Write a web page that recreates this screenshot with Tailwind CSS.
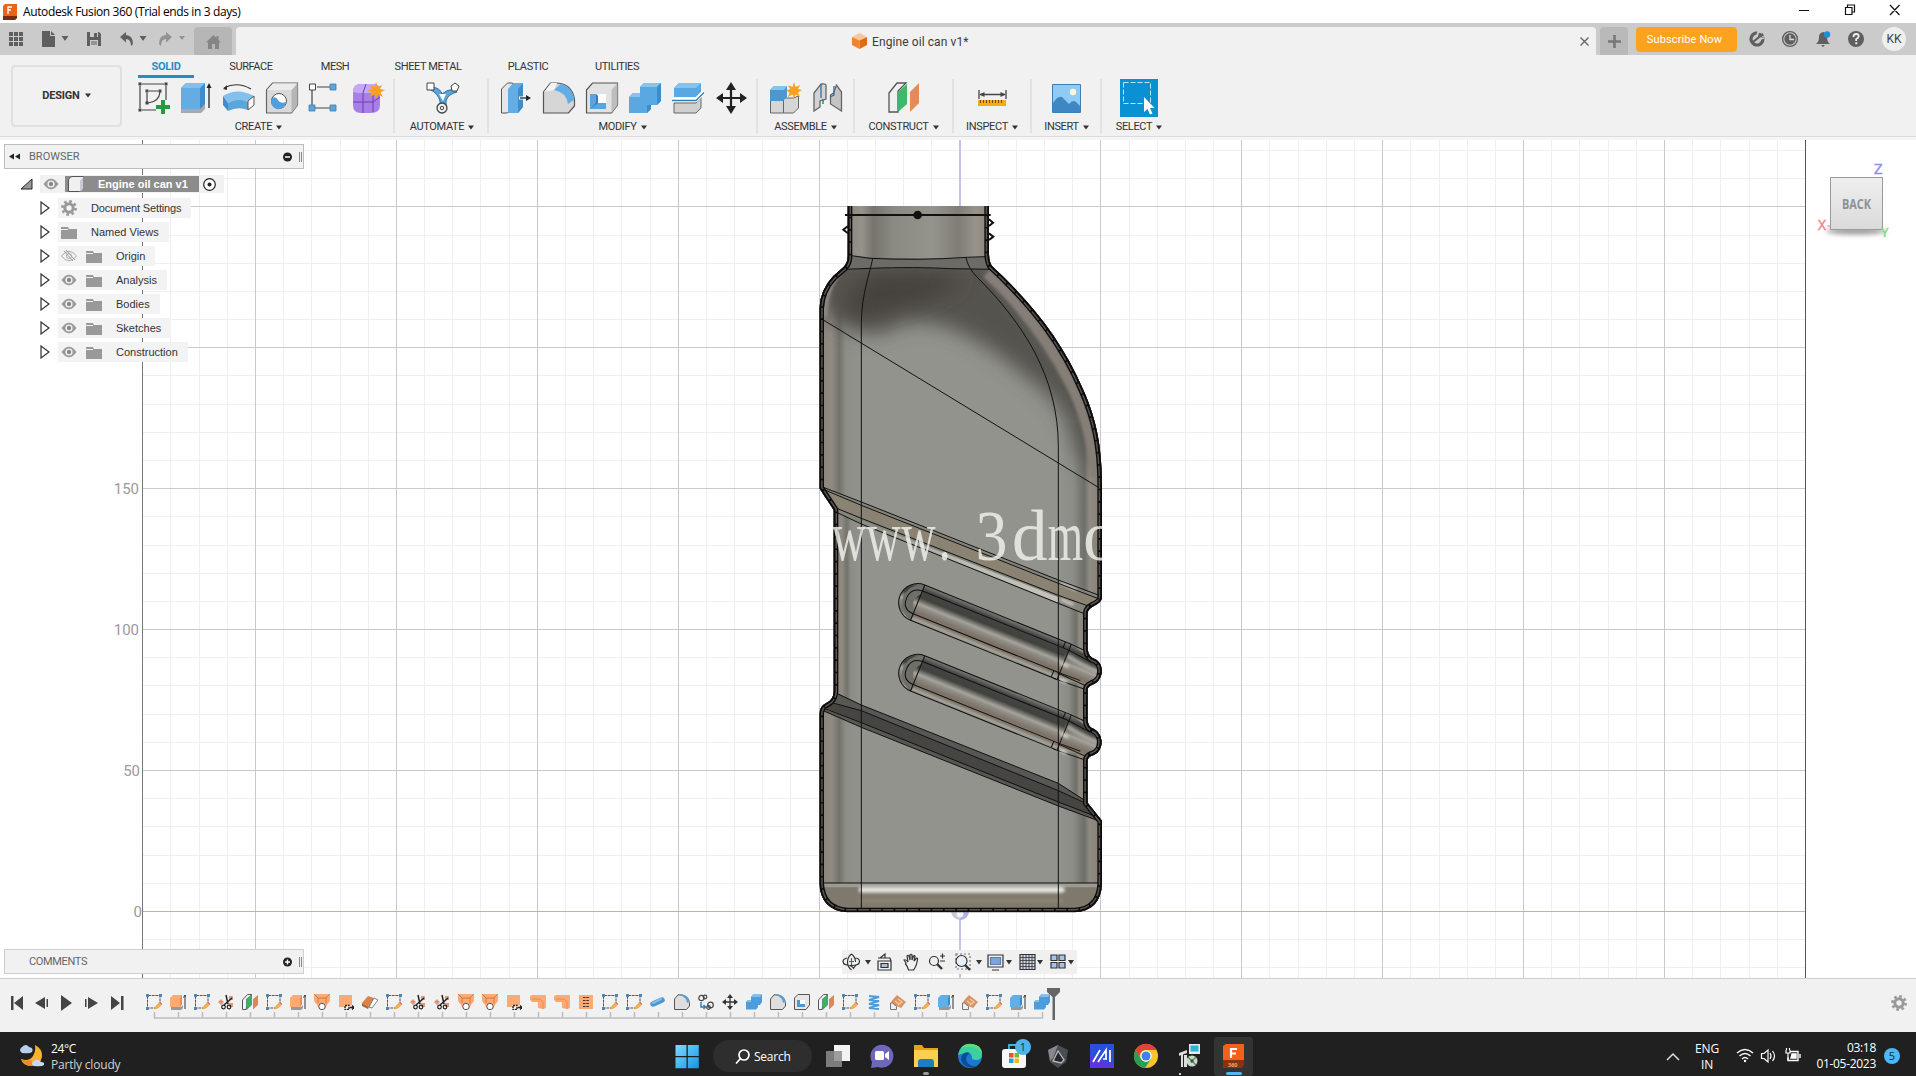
<!DOCTYPE html>
<html lang="en">
<head>
  <meta charset="UTF-8">
  <meta name="viewport" content="width=device-width, initial-scale=1.0">
  <title>Autodesk Fusion 360</title>
  <script src="https://cdn.jsdelivr.net/npm/@tailwindcss/browser@4"></script>
</head>
<body class="w-[1916px] h-[1076px] overflow-hidden flex flex-col bg-white font-['Roboto',sans-serif] text-[#333]">

  <!-- Shared icons -->
  <svg class="hidden">
    <symbol id="i-caret" viewBox="0 0 6 5"><path d="M0 .5h6L3 4.5z" fill="currentColor"/></symbol>
    <symbol id="i-eye" viewBox="0 0 16 12"><path d="M.5 6Q8-4.500 15.500 6 8 16.500.5 6z" fill="#999"/><circle cx="8" cy="6" r="3.600" fill="#f1f1f1"/><circle cx="8" cy="6" r="2.200" fill="#888"/></symbol>
    <symbol id="i-eyeoff" viewBox="0 0 16 12"><path d="M.5 6Q8-3.500 15.500 6 8 15.500.5 6z" fill="none" stroke="#aaa"/><circle cx="8" cy="6" r="2.500" fill="none" stroke="#aaa"/><path d="M3 1l9 10M5 0l9 10" stroke="#999" stroke-width=".9"/></symbol>
    <symbol id="i-folder" viewBox="0 0 16 13"><path d="M0 1h7l1 2h8v10H0z" fill="#999"/><path d="M0 3.500h7" stroke="#f1f1f1"/></symbol>
    <symbol id="i-gear" viewBox="0 0 16 16"><circle cx="8" cy="8" r="4.200" fill="none" stroke="#999" stroke-width="3"/><circle cx="8" cy="8" r="6.600" fill="none" stroke="#999" stroke-width="2.600" stroke-dasharray="2.600 2.580"/></symbol>
    <symbol id="i-tri" viewBox="0 0 10 14"><path d="M1 1v12l8-6z" fill="#fff" stroke="#333" stroke-width="1.200"/></symbol>

    <symbol id="t-sketch" viewBox="0 0 16 16"><path d="M1.500 2v12h8M2 1.500h12v7" fill="none" stroke="#444" stroke-width=".9" stroke-dasharray="3 .7"/><g fill="#4d86b5"><path d="M0 0h3v3H0zM13 0h3v3h-3zM0 13h3v3H0z"/></g><path d="M8.500 15.500l1-3.500 3.500-3.500 2.500 2.500-3.500 3.500z" fill="#f0b04c"/><path d="M13 8.500l1-1 2.500 2.500-1 1z" fill="#dd6a4a"/></symbol>
    <symbol id="t-extrude" viewBox="0 0 16 16"><path d="M1 13h10l2-2v3l-2 2H1z" fill="#999"/><path d="M0 4l3-3h9v9l-2 3H0z" fill="#fbaa73"/><path d="M10 4v9l2-3V1z" fill="#ea8c4e"/><path d="M15 15V2M13.500 3.500L15 1l1.500 2.500" stroke="#333" fill="none"/></symbol>
    <symbol id="t-extrudeb" viewBox="0 0 16 16"><path d="M1 13h10l2-2v3l-2 2H1z" fill="#999"/><path d="M0 4l3-3h9v9l-2 3H0z" fill="#62aee6"/><path d="M10 4v9l2-3V1z" fill="#3b88c6"/><path d="M15 15V2M13.500 3.500L15 1l1.500 2.500" stroke="#333" fill="none"/></symbol>
    <symbol id="t-cut" viewBox="0 0 16 16"><path d="M0 8l3-3 3 3-3 3zM11 2h4v4h-4zM11 9h4v4h-4z" fill="#d99a78"/><path d="M8 1l2 9M14 4l-8 7" stroke="#222" stroke-width="1.500"/><circle cx="5.500" cy="13" r="1.800" fill="none" stroke="#222" stroke-width="1.200"/><circle cx="11" cy="13" r="1.800" fill="none" stroke="#222" stroke-width="1.200"/></symbol>
    <symbol id="t-plane" viewBox="0 0 16 16"><path d="M.5 6l5-5.500h4L4 15.500H.5z" fill="#f4f4f4" stroke="#555"/><path d="M4.500 5l5-4v10l-5 4.500z" fill="#3fae68" stroke="#2a7a48" stroke-width=".6"/><path d="M11 5l5-4v10l-5 4.500z" fill="#dd8658"/></symbol>
    <symbol id="t-loft" viewBox="0 0 16 16"><path d="M0 0h16v7l-3 4-2 4H5L3 11 0 7z" fill="#fbaa73"/><path d="M0 0l4 4v5M16 0l-4 4v5M4 4h8" stroke="#d07a42" fill="none"/><circle cx="8" cy="12.500" r="3.200" fill="#fff" stroke="#555"/></symbol>
    <symbol id="t-hole" viewBox="0 0 16 16"><path d="M1 1h13v10H6v2H1z" fill="#fbaa73"/><path d="M7 11.500h4v4H7z" fill="#fff" stroke="#222" stroke-width="1.400" stroke-dasharray="2 .7"/><path d="M12 13.500h4M14 11.500l2 2-2 2" stroke="#222" fill="none" stroke-width="1.300"/></symbol>
    <symbol id="t-box" viewBox="0 0 16 16"><path d="M0 9l6-7 6 2-5 9z" fill="#d9834a"/><path d="M0 9l7 4-1 2-6-3z" fill="#b9622f"/><path d="M12 4l4 2-6 8-3-1z" fill="#fff" stroke="#666" stroke-width=".8"/></symbol>
    <symbol id="t-bend" viewBox="0 0 16 16"><path d="M0 2l2-1h14v13l-3 1-5-1V8H2L0 6z" fill="#fbaa73"/><path d="M2 5h8l3 3v7" fill="none" stroke="#e88c50"/></symbol>
    <symbol id="t-thread" viewBox="0 0 16 16"><path d="M1 1h14v14H1z" fill="#fbaa73"/><path d="M5 3.500h6M5 6.500h6M5 9.500h6M5 12.500h6" stroke="#333" stroke-width="1.100" stroke-dasharray="2.500 .8"/></symbol>
    <symbol id="t-pipe" viewBox="0 0 16 16"><path d="M3 10l9-4" stroke="#4d97d1" stroke-width="5.500" stroke-linecap="round"/><path d="M3 9l8-4" stroke="#82bdea" stroke-width="2" stroke-linecap="round"/></symbol>
    <symbol id="t-fillet" viewBox="0 0 16 16"><path d="M.5 15.500V5L4 .8Q14 0 15.500 9v3l-3 3.500z" fill="#dedede" stroke="#555"/><path d="M5 1Q13 3 13 9l2.500-2Q14 1 8 .8z" fill="#5a9dd0"/></symbol>
    <symbol id="t-joint" viewBox="0 0 16 16"><g fill="none" stroke="#444" stroke-width="1.200"><circle cx="3.500" cy="4" r="2.700"/><circle cx="7" cy="3" r="1.800"/><circle cx="12.500" cy="11" r="2.800"/><circle cx="10.500" cy="13.500" r="1.800"/></g><path d="M3 8v5h4M5.500 11l2 2-2 2" stroke="#3577b5" fill="none" stroke-width="1.400"/></symbol>
    <symbol id="t-move" viewBox="0 0 16 16"><path d="M8 2v12M2 8h12" stroke="#333" stroke-width="1.300"/><path d="M8 0l3 4H5zM8 16l3-4H5zM0 8l4-3v6zM16 8l-4-3v6z" fill="#333"/></symbol>
    <symbol id="t-combine" viewBox="0 0 16 16"><path d="M5 3l2-2.500h9V8l-2 3h-2v2l-2 2.500H0V8l2-2h3z" fill="#4d9cdb"/><path d="M5 3l2-2.500h9L14 3zM0 8l2-2h3v2z" fill="#82bfee"/></symbol>
    <symbol id="t-shell" viewBox="0 0 16 16"><path d="M.5 4L4 .5h11.500V11L12 15.500H.5z" fill="#e6e6e6" stroke="#555"/><path d="M3 6h8v7H3z" fill="#fff"/><path d="M3 6h3v4h5v3H3z" fill="#4d97d1"/></symbol>
    <symbol id="t-coil" viewBox="0 0 16 16"><path d="M3 2l10 1-10 3 10 1-10 3 10 1-10 3 10 1" fill="none" stroke="#4d9cdb" stroke-width="2"/></symbol>
    <symbol id="t-tan" viewBox="0 0 16 16"><path d="M1.500 10V7L7 1l9 7-5 6z" fill="#d89264"/><path d="M.5 15.500V9h2l4 3.500v3z" fill="#eee" stroke="#666" stroke-width=".9"/><path d="M8 5l4 3-4 3M5 7l4 3" stroke="#f3cfa6" stroke-width="1.300" fill="none"/></symbol>
  </svg>

  <!-- Title bar -->
  <header class="h-[23px] shrink-0 flex items-center bg-white text-black font-['Open_Sans',sans-serif]">
    <svg class="ml-[3px] w-[14px] h-[16px]" viewBox="0 0 14 16"><path d="M0 2l2-2h12v14l-2 2H0z" fill="#e8641b"/><path d="M0 12h14v2l-2 2H0z" fill="#7a2c0c"/><path d="M5 10V3h4M5 6h3" stroke="#fff" stroke-width="1.300" fill="none"/></svg>
    <span class="ml-[6px] text-[12px] whitespace-nowrap tracking-[-0.380px]">Autodesk Fusion 360 (Trial ends in 3 days)</span>
    <svg class="ml-auto mr-[15px] mb-[3px] w-[102px] h-[12px]" viewBox="0 0 102 12" fill="none" stroke="#111" stroke-width="1.200"><path d="M0 6.500h10M46.500 3.500h6.500v7h-6.500zM48.500 3V1h7v7h-2M91 1l9.500 10M100.500 1L91 11"/></svg>
  </header>

  <!-- Tab strip -->
  <div class="h-[32px] shrink-0 flex bg-[#cbcbcb] text-[#666]">
    <svg class="w-[194px] h-[32px]" viewBox="0 0 194 32" fill="#5f5f5f">
      <path d="M9 9h4v4H9zM14 9h4v4h-4zM19 9h4v4h-4zM9 14h4v4H9zM14 14h4v4h-4zM19 14h4v4h-4zM9 19h4v4H9zM14 19h4v4h-4zM19 19h4v4h-4z"/>
      <path d="M42 8h8v5h5v11H42zM51 8l4 4h-4zM61.500 13h7l-3.500 5z"/>
      <path d="M87 9h12l2 2v12H87z"/><path d="M90 9h8v5h-8zM90 17h8v6h-8z" fill="#cbcbcb"/><path d="M94 10h3v4h-3zM91 18.500h6v1h-6zM91 20.500h6v1h-6z"/>
      <path d="M120 14l6-5v3q7 .5 7 9l-2 2q0-7-5-7v3.500zM139.500 13h7l-3.500 5z"/>
      <path d="M172 14l-6-5v3q-7 .5-7 9l2 2q0-7 5-7v3.500zM179 13h6l-3 4z" fill="#939393"/>
    </svg>
    <div class="mt-[4px] w-[38px] h-[28px] bg-[#b6b6b6] rounded-t-sm flex items-center justify-center">
      <svg class="mt-[2px] w-[15px] h-[14px]" viewBox="0 0 15 14"><path d="M0 7.500L7.500 0l3 3V1h2v4L15 7.500h-2V14H9V9H6v5H2V7.500z" fill="#858585"/></svg>
    </div>
    <div class="mt-[4px] ml-[4px] w-[1360px] h-[28px] bg-[#f1f1f1] rounded-t-sm flex items-center">
      <svg class="ml-[616px] w-[15px] h-[16px]" viewBox="0 0 15 16"><path d="M0 4l7.500-4L15 4 7.500 7.500z" fill="#f9c796"/><path d="M0 4l7.500 3.500V16L0 12z" fill="#ee8433"/><path d="M15 4L7.500 7.500V16L15 12z" fill="#dc6a1c"/></svg>
      <span class="ml-[5px] mt-px text-[12px] text-[#3a3a3a] whitespace-nowrap tracking-[0.090px]">Engine oil can v1*</span>
      <svg class="ml-auto mr-[7px] w-[9px] h-[9px]" viewBox="0 0 9 9"><path d="M.5.5l8 8M8.500.5l-8 8" stroke="#666" stroke-width="1.400"/></svg>
    </div>
    <div class="mt-[4px] ml-[4px] w-[28px] h-[28px] bg-[#b9b9b9] rounded-t-sm flex items-center justify-center">
      <svg class="w-[13px] h-[13px]" viewBox="0 0 13 13"><path d="M6.500 0v13M0 6.500h13" stroke="#777" stroke-width="2.600"/></svg>
    </div>
    <button class="ml-[8px] mt-[4px] w-[101px] h-[25px] bg-[#fba31e] rounded text-white text-[11px] pr-1 pt-px whitespace-nowrap tracking-[0.120px]">Subscribe Now</button>
    <svg class="ml-[8px] w-[130px] h-[32px]" viewBox="0 0 130 32">
      <circle cx="12" cy="16" r="6" fill="none" stroke="#5f5f5f" stroke-width="3.200" stroke-dasharray="30 4 2 2" transform="rotate(-20 12 16)"/><path d="M13 9l-1 4 3 3 4-1" stroke="#cbcbcb" stroke-width="1.600" fill="none"/><path d="M7 20l7-6M14 14l4-3M14 14l1-4" stroke="#5f5f5f" stroke-width="2.200" fill="none"/>
      <circle cx="45" cy="16" r="7.400" fill="none" stroke="#5f5f5f" stroke-width="1.400"/><circle cx="45" cy="16" r="5.700" fill="#5f5f5f"/><path d="M45 12v4.500h4" stroke="#ddd" stroke-width="1.300" fill="none"/>
      <path d="M71 21q3-2 3-7 0-4 4-5 4 1 4 5 0 5 3 7zM76 22h4l-2 2z" fill="#5f5f5f"/><circle cx="82" cy="11.500" r="3.200" fill="#1d8fd6"/>
      <circle cx="111" cy="16" r="8" fill="#5f5f5f"/><path d="M108.500 14q0-3 2.700-3 2.500 0 2.500 2.300 0 1.500-2.500 2.700v2" stroke="#eee" stroke-width="1.800" fill="none"/><path d="M110.300 19.200h2v2h-2z" fill="#eee"/>
    </svg>
    <div class="ml-[7px] mt-[4px] size-6 rounded-full bg-[#efefef] text-[#444] text-[12px] flex items-center justify-center">KK</div>
  </div>

  <!-- Ribbon -->
  <div class="h-[82px] shrink-0 flex bg-[#f1f1f1] border-b border-[#dcdcdc] text-[11px] leading-[12px]">
    <button class="ml-[11px] mt-[10px] w-[111px] h-[62px] border-2 border-[#e0e0e0] rounded font-bold tracking-[-0.200px] flex items-center justify-center gap-[5px] pb-px">DESIGN<svg class="w-[6px] h-[5px]"><use href="#i-caret"/></svg></button>
    <div class="ml-[2px]">
      <nav class="h-[23px] pl-[14px] flex text-center tracking-[-0.400px] whitespace-nowrap *:pt-[6px]">
        <div class="w-[56px] h-[23px] border-b-[3px] border-[#1f8fc8] text-[#1f8fc8] font-bold tracking-[-0.300px]">SOLID</div>
        <div class="w-[114px]">SURFACE</div>
        <div class="w-[54px]">MESH</div>
        <div class="w-[132px]">SHEET METAL</div>
        <div class="w-[68px]">PLASTIC</div>
        <div class="w-[110px]">UTILITIES</div>
      </nav>
      <div class="flex tracking-[-0.330px] pt-px *:h-[54px] *:flex *:flex-col *:items-center">
        <div class="w-[271px] border-r-2 border-[#e2e2e2]">
          <div class="h-[38px] pl-[2px] flex items-center *:w-[43px] *:h-[34px]">
            <svg viewBox="0 0 43 34"><g fill="none" stroke="#444" stroke-width="1.200"><path d="M11 3h22M9 5v22M11 29h14M35 5v14"/><path d="M18 10h9M16 12v9M17 22q11-1 12-11" /></g><g fill="#444"><path d="M7.500 1.500h3v3h-3zM33.500 1.500h3v3h-3zM7.500 27.500h3v3h-3zM14.500 8.500h3v3h-3zM27.500 8.500h3v3h-3zM14.500 20.500h3v3h-3z"/></g><path d="M30 19h4v5h5v4h-5v5h-4v-5h-5v-4h5z" fill="#1f9d45"/></svg>
            <svg viewBox="0 0 43 34"><path d="M7 27h19l5-4v5l-4 4H7z" fill="#aaa"/><path d="M7 7l5-5h19v21l-5 5H7z" fill="#63ade4"/><path d="M26 7l5-5v21l-5 5z" fill="#3f8cc8"/><path d="M7 7l5-5h19l-5 5z" fill="#7fc0f0"/><path d="M35 27V6" stroke="#222" stroke-width="1.300"/><path d="M35 2l2.500 5h-5z" fill="#222"/></svg>
            <svg viewBox="0 0 43 34"><path d="M7 7q13-7 27 1" fill="none" stroke="#333" stroke-width="1.200"/><path d="M6 8l4-4v5z" fill="#333"/><path d="M6 15q14-9 31 0l-6 6q-10-5-20 1z" fill="#82c0ee"/><path d="M6 15l5 7v8l-5-6z" fill="#3f8cc8"/><path d="M11 22q10-6 20-1v8q-10-4-20 1z" fill="#5aa5dc"/><path d="M31 20l6-5v9l-6 5z" fill="#fff" stroke="#555"/></svg>
            <svg viewBox="0 0 43 34"><path d="M6.500 9l6-7h25v22l-6 8h-25z" fill="#d9d9d9" stroke="#666" stroke-width="1.200"/><path d="M31.500 9l6-7v22l-6 8z" fill="#b5b5b5"/><path d="M7 9l6-6.500h24L31.500 9z" fill="#ececec"/><circle cx="19" cy="20" r="7.500" fill="#fff" stroke="#555"/><path d="M12 17a7.500 7.500 0 1 0 14 4q-6 2-8-2t-6-2z" fill="#4f9fdc"/></svg>
            <svg viewBox="0 0 43 34"><path d="M14 6h14M9 9v15M12 27h15" stroke="#444" stroke-width="1.200"/><path d="M6.500 3h6v6h-6z" fill="#fff" stroke="#444"/><g fill="#5aa5dc" stroke="#3f7faf" stroke-width=".8"><path d="M27 3h6v6h-6zM6 24h6v6H6zM27 24h6v6h-6z"/></g></svg>
            <svg viewBox="0 0 43 34"><path d="M7 11q0-8 8-8h13q6 0 6 8v13q0 8-9 8H15q-8 0-8-8z" fill="#a77fe6"/><path d="M7 11q0-8 8-8h13q4 0 6 5l-6 4H12z" fill="#c7a8f5"/><path d="M7 21h20l7-5M17 12v20M27 12v19M17 12l3-9" stroke="#6d3fb0" fill="none"/><path d="M30 1l1.500 5L36 4l-2 4 5 1-4.500 2.500L37 16l-5-2.500L30 18l-1.500-4.500L24 16l1.500-5L21 9.500 26 8l-2-4 4.500 2z" fill="#f9a11c"/></svg>
          </div>
          <div class="mt-[4px] flex items-center gap-[4px]">CREATE<svg class="w-[6px] h-[5px]"><use href="#i-caret"/></svg></div>
        </div>
        <div class="w-[94px] border-r-2 border-[#e2e2e2] pl-[2px]">
          <svg class="w-[43px] h-[38px] py-[2px]" viewBox="0 0 43 34"><path d="M8 5q12 2 13 8 4-4 12-5l3 3q-9 2-11 9v8h-6v-8Q17 12 8 8z" fill="#5aa5dc" stroke="#2d6ea5"/><path d="M18 13h7l-3 7z" fill="#fff"/><path d="M6 2h7v7H6z" fill="#fff" stroke="#444"/><path d="M30 5l4-3 4 3-2 5h-5z" fill="#fff" stroke="#444"/><circle cx="21" cy="27" r="5" fill="#eee" stroke="#444" stroke-width="1.300"/><circle cx="21" cy="27" r="1.700" fill="none" stroke="#444"/></svg>
          <div class="mt-[4px] flex items-center gap-[4px]">AUTOMATE<svg class="w-[6px] h-[5px]"><use href="#i-caret"/></svg></div>
        </div>
        <div class="w-[269px] border-r-2 border-[#e2e2e2]">
          <div class="h-[38px] pl-[3px] flex items-center *:w-[43px] *:h-[34px]">
            <svg viewBox="0 0 43 34"><path d="M6.500 8l6-6h5v24l-5 6h-6z" fill="#e6e6e6" stroke="#555"/><path d="M13 8l5-6h10v24l-5 6H13z" fill="#63ade4"/><path d="M23 8l5-6v24l-5 6z" fill="#3f8cc8"/><path d="M24 17h8" stroke="#fff" stroke-width="3"/><path d="M25 17h9" stroke="#222" stroke-width="1.300"/><path d="M31 14l5 3-5 3z" fill="#222"/></svg>
            <svg viewBox="0 0 43 34"><path d="M5.500 32V11l7-9h5q16 0 19 16v7l-6 7z" fill="#d6d6d6" stroke="#555" stroke-width="1.200"/><path d="M6 11l7-9h6l-3 7z" fill="#f4f4f4"/><path d="M16 9l7-6.500q11 3 13.500 16L30 23Q28 11 16 9z" fill="#63ade4"/></svg>
            <svg viewBox="0 0 43 34"><path d="M5.500 9l6-7h25v22l-6 8h-25z" fill="#e2e2e2" stroke="#555" stroke-width="1.200"/><path d="M30.500 9l6-7v22l-6 8z" fill="#bdbdbd"/><path d="M9 13h16v15H9z" fill="#fff"/><path d="M9 13h6l2 2v7h8v6H9z" fill="#5aa5dc"/><path d="M9 28l8-6v-7l-2-2v9z" fill="#2f7dba"/></svg>
            <svg viewBox="0 0 43 34"><path d="M5 16l4-4h7V6l4-4h17v18l-4 4h-6v4l-4 4H5z" fill="#5aa8e2"/><path d="M5 16l4-4h7v4zM16 6l4-4h17l-4 4z" fill="#86c4f0"/><path d="M33 6l4-4v18l-4 4zM23 24h4v4l-4 4z" fill="#3f8cc8"/></svg>
            <svg viewBox="0 0 43 34"><path d="M7 7l5-5h22v9l-5 5H7z" fill="#5aa8e2"/><path d="M7 7l5-5h22l-5 5z" fill="#86c4f0"/><path d="M7 22h22l5-6v11l-5 5H7z" fill="#d0d0d0" stroke="#666"/><path d="M5 19h24l8-8" stroke="#fff" stroke-width="4" fill="none"/><path d="M5 19.500h24l8-8" stroke="#2f7dba" stroke-width="1.300" fill="none"/></svg>
            <svg viewBox="0 0 43 34"><path d="M21 5v24M9 17h24" stroke="#222" stroke-width="2.200"/><path d="M21 1l5 8H16zM21 33l5-8H16zM6 17l7-5v10zM37 17l-7-5v10z" fill="#222"/></svg>
          </div>
          <div class="mt-[4px] flex items-center gap-[4px]">MODIFY<svg class="w-[6px] h-[5px]"><use href="#i-caret"/></svg></div>
        </div>
        <div class="w-[97px] border-r-2 border-[#e2e2e2]">
          <div class="h-[38px] pl-px flex items-center *:w-[43px] *:h-[34px]">
            <svg viewBox="0 0 43 34"><path d="M7.500 17h13v15h-13zM20.500 17h10l5-2v12l-5 5h-10z" fill="#d6d6d6" stroke="#666"/><path d="M7 9l4-4h13v11l-4 4H7z" fill="#4d97d1"/><path d="M7 9l4-4h13l-3 4z" fill="#86c4f0"/><path d="M31 1l1.500 5L37 4l-2 4 4 1-4 2.500L37 16l-4.500-2.500L31 18l-1.500-4.500L25 16l1.500-4.500L23 9.500 27 8l-2-4 4.500 2z" fill="#f9a11c"/></svg>
            <svg viewBox="0 0 43 34"><path d="M8 12l7-9q6-1 5 3v12l-6 2v6l-6 4z" fill="#d3d3d3" stroke="#666" stroke-width="1.300"/><path d="M35.500 30l-11-7V14l3-2 3-8 5 7z" fill="#c4c4c4" stroke="#666" stroke-width="1.300"/><path d="M15 3v14M28 5v9l-4 2" stroke="#2f6fb0" fill="none" stroke-width="1.300"/><path d="M17 18v5" stroke="#1f9d45" stroke-width="1.500"/></svg>
          </div>
          <div class="mt-[4px] flex items-center gap-[4px]">ASSEMBLE<svg class="w-[6px] h-[5px]"><use href="#i-caret"/></svg></div>
        </div>
        <div class="w-[99px] border-r-2 border-[#e2e2e2]">
          <svg class="w-[43px] h-[38px] py-[2px]" viewBox="0 0 43 34"><path d="M7 12l8-10h9l-8 8v21H7z" fill="#f0f0f0" stroke="#555" stroke-width="1.300"/><path d="M16 11l9-8v20l-9 8z" fill="#3fb86c"/><path d="M28 11l9-9v20l-9 9z" fill="#e68a5c"/></svg>
          <div class="mt-[4px] flex items-center gap-[4px]">CONSTRUCT<svg class="w-[6px] h-[5px]"><use href="#i-caret"/></svg></div>
        </div>
        <div class="w-[78px] border-r-2 border-[#e2e2e2]">
          <svg class="w-[43px] h-[38px] py-[2px]" viewBox="0 0 43 34"><path d="M8 9v9M35 9v9M9 13.500h25" stroke="#444" stroke-width="1.300"/><path d="M8.500 13.500l5-2.500v5zM34.500 13.500l-5-2.500v5z" fill="#444"/><path d="M7 19h28v6H7z" fill="#f2ab19"/><path d="M9.500 19v3M12.500 19v3M15.500 19v3M18.500 19v3M21.500 19v3M24.500 19v3M27.500 19v3M30.500 19v3" stroke="#6b4a00"/></svg>
          <div class="mt-[4px] flex items-center gap-[4px]">INSPECT<svg class="w-[6px] h-[5px]"><use href="#i-caret"/></svg></div>
        </div>
        <div class="w-[70px] border-r-2 border-[#e2e2e2]">
          <svg class="w-[43px] h-[38px] py-[2px]" viewBox="0 0 43 34"><path d="M7.500 3.500h28v28h-28z" fill="#8fcbf5" stroke="#3d7fae"/><path d="M8 22q6-9 10-5l6 6q4-5 7-2l4 4v6H8z" fill="#3f87c2"/><circle cx="28" cy="11" r="3.200" fill="#fff8d8"/></svg>
          <div class="mt-[4px] pl-px flex items-center gap-[4px]">INSERT<svg class="w-[6px] h-[5px]"><use href="#i-caret"/></svg></div>
        </div>
        <div class="w-[74px]">
          <svg class="size-[38px] shrink-0" viewBox="0 0 38 38"><path d="M0 0h38v38H0z" fill="#0a91d4"/><path d="M3.500 3.500h27v21h-27z" fill="none" stroke="#bfe4f7" stroke-dasharray="5 2"/><path d="M24 18v15l3.500-3 2.500 5.500 2.500-1-2.500-5.500h4.500z" fill="#fff"/></svg>
          <div class="mt-[4px] flex items-center gap-[4px]">SELECT<svg class="w-[6px] h-[5px]"><use href="#i-caret"/></svg></div>
        </div>
      </div>
    </div>
  </div>

  <!-- Viewport -->
  <main class="relative h-[842px] shrink-0 overflow-hidden border-b border-[#cfcfcf]">
    <svg class="block w-[1916px] h-[841px]" viewBox="0 137 1916 841">
      <defs>
        <linearGradient id="neck"><stop offset="0" stop-color="#8d877e"/><stop offset=".1" stop-color="#95938a"/><stop offset=".18" stop-color="#76746d"/><stop offset=".32" stop-color="#8b8a82"/><stop offset=".6" stop-color="#94948c"/><stop offset=".78" stop-color="#7f7d76"/><stop offset=".9" stop-color="#989389"/><stop offset="1" stop-color="#8d877e"/></linearGradient>
        <linearGradient id="colL"><stop offset="0" stop-color="#8b837b"/><stop offset=".3" stop-color="#8f8a82"/><stop offset=".48" stop-color="#73726b"/><stop offset=".62" stop-color="#8d8d86"/><stop offset="1" stop-color="#92938d"/></linearGradient>
        <linearGradient id="colR"><stop offset="0" stop-color="#92938d"/><stop offset=".35" stop-color="#8b8c86"/><stop offset=".6" stop-color="#6f6e68"/><stop offset=".72" stop-color="#8f8b83"/><stop offset="1" stop-color="#857d76"/></linearGradient>
        <linearGradient id="slot" x2="0" y2="1"><stop offset="0" stop-color="#7c7d77"/><stop offset=".14" stop-color="#454642"/><stop offset=".35" stop-color="#41423e"/><stop offset=".52" stop-color="#a5a39b"/><stop offset=".6" stop-color="#8f8c84"/><stop offset=".75" stop-color="#7d7267"/><stop offset=".86" stop-color="#857b6f"/><stop offset=".93" stop-color="#a3a198"/><stop offset="1" stop-color="#90918a"/></linearGradient>
        <linearGradient id="strip"><stop offset="0" stop-color="#8b8c85"/><stop offset=".5" stop-color="#b9bab3"/><stop offset="1" stop-color="#c3c3bc"/></linearGradient>
        <linearGradient id="cube" x2="0" y2="1"><stop offset="0" stop-color="#efefef"/><stop offset="1" stop-color="#dadada"/></linearGradient>
        <filter id="b8" filterUnits="userSpaceOnUse" x="-400" y="-400" width="1800" height="3000"><feGaussianBlur stdDeviation="5"/></filter>
        <filter id="b4" filterUnits="userSpaceOnUse" x="1800" y="210" width="116" height="40"><feGaussianBlur stdDeviation="2.500"/></filter>
        <filter id="b30" filterUnits="userSpaceOnUse" x="-100" y="0" width="1200" height="1200"><feGaussianBlur stdDeviation="30"/></filter>
        <path id="wall" d="M173 48V200Q173 218 160 232L130 258Q90 300 88 355V895L131 960V1505Q129 1530 110 1538Q88 1548 88 1572V2080Q92 2162 172 2167H855Q933 2162 936 2080V1892L893 1838V1712Q893 1702 905 1697C942 1688 947 1630 905 1614Q893 1606 893 1590V1500Q893 1490 905 1485C945 1472 945 1415 908 1405Q893 1395 893 1375V1270Q893 1258 908 1250Q936 1238 936 1222V880C935 770 920 690 880 600C820 460 740 360 640 260L606 228Q597 215 597 190V48"/>
        <clipPath id="body"><use href="#wall"/></clipPath>
        <clipPath id="mark"><path d="M800 480h302v100H800z"/></clipPath>
      </defs>

      <!-- grid -->
      <g id="grid" fill="none"></g>
      <path d="M142.500 137v841" stroke="#777"/>
      <path d="M1805.500 137v841" stroke="#555"/>
      <path d="M960 137v841" stroke="#c3c3ee" stroke-width="2"/>
      <path d="M143 911.500h1662" stroke="#e9a0a0"/>
      <path d="M0 137h1916v3H0z" fill="#f5f5f5"/>
      <g font-family="Roboto, sans-serif" font-size="15" fill="#9a9a9a" text-anchor="end"><text x="139" y="494">150</text><text x="139" y="635">100</text><text x="140" y="776">50</text><text x="142" y="917">0</text></g>
      <circle cx="960" cy="911" r="9" fill="#c9c9d2"/><path d="M960 911h9a9 9 0 0 1-9 9z" fill="#aeb0e8"/><circle cx="960" cy="914" r="3.500" fill="#f3f3fa"/>

      <!-- bottle section -->
      <g transform="translate(790 190) scale(.33333)">
        <g clip-path="url(#body)">
          <path d="M80 40h870v2140H80z" fill="#92938d"/>
          <path d="M88 200h126v1960H88z" fill="url(#colL)"/>
          <path d="M131 960h83v580h-83z" fill="url(#colL)"/>
          <path d="M805 700h130v1470H805z" fill="url(#colR)"/>
          <path d="M805 1250h88v590h-88z" fill="url(#colR)"/>
          <path d="M60 200H600L920 640 905 840 860 780Q830 640 720 570Q560 430 430 400Q340 385 290 425Q200 450 100 360Z" fill="#55524d" filter="url(#b30)"/>
          <path d="M225 260Q380 235 520 262Q470 330 330 350Q220 400 150 360Z" fill="#45423e" filter="url(#b30)"/>
          <path d="M590 250Q750 395 850 600Q905 720 915 860" fill="none" stroke="#857f77" stroke-width="30" filter="url(#b8)"/>
          <path d="M174 220Q105 280 105 380" fill="none" stroke="#8c8a82" stroke-width="14" filter="url(#b8)"/>
          <path d="M173 40h425v160Q385 215 173 197z" fill="url(#neck)"/>
          <path d="M173 198Q385 214 598 200V238Q385 228 173 238z" fill="#6d6b65"/>

          <g transform="translate(0 870)">
            <path d="M100 22L214 66 805 300 930 350 889 402 805 372 214 130 133 92z" fill="#85847b"/>
            <path d="M105 30L214 76 805 310 925 354 892 375 805 348 214 114 135 84z" fill="#8a8272"/>
            <path d="M214 122L805 352V368L214 132z" fill="url(#strip)"/>
            <path d="M812 308L860 330" stroke="#f2f2ea" stroke-width="5" filter="url(#b8)"/><path d="M812 358L850 374" stroke="#f2f2ea" stroke-width="6" filter="url(#b8)"/>

            <path d="M140 638L214 675 805 910 889 962 935 1026 805 978 214 742 90 688z" fill="#575853"/>
            <path d="M120 668L214 692 805 932 890 972 925 1015 805 966 214 728 110 684z" fill="#464541"/>

            <path d="M95 1212H930V1300H95z" fill="#7e796c"/>
            <path d="M100 1210H925V1222H100z" fill="#9b9b94"/>
            <path d="M215 1229H815" stroke="#e2e3dc" stroke-width="18" stroke-linecap="round" filter="url(#b8)"/>
            <path d="M205 1262H820" stroke="#8b8473" stroke-width="12" filter="url(#b8)"/>

            <g id="slotshape">
              <g transform="translate(383 368) rotate(22)">
                <path d="M0-57H470L515-46H570A46 46 0 0 1 570 46H515L470 57H0A57 57 0 0 1 0-57z" fill="url(#slot)"/>
                <path d="M0-56A57 57 0 0 0 0 56L10 30Q-30 10 0-30z" fill="#6e6f69"/>
                <path d="M474-20Q540-8 590-10" stroke="#aaa69e" stroke-width="16" fill="none" filter="url(#b8)"/>
                <g fill="none" stroke="#111" stroke-width="3">
                  <path d="M530-54L470-57H0A57 57 0 0 0 0 57H470M0-38H470L545-30M0 36H470L540 34"/>
                  <path d="M0-38Q-36-36-36 0T0 36" /><path d="M0-57V57M455-57V-38M455 36V57M474-57V57"/>
                </g>
              </g>
              <path d="M805 580L893 620M790 595L885 628" stroke="#111" stroke-width="3"/>
              <path d="M812 550L835 560M810 598L830 608" stroke="#f2f2ea" stroke-width="6" filter="url(#b8)"/>
            </g>
            <use href="#slotshape" y="212"/>

            <g fill="none" stroke="#111" stroke-width="3">
              <path d="M100 22L214 66 805 300 925 345M105 30L214 76 805 310 925 356M133 82L214 115 805 346 900 380M133 94L214 132 805 370 885 402"/>
              <path d="M140 640L214 675 805 910 885 962M118 666L214 692 805 932 892 972M100 684L214 728 805 966 925 1012M95 690L214 742 805 978 930 1024"/>
              <path d="M98 1209H928"/>
            </g>
          </g>
          <g fill="none" stroke="#111" stroke-width="3">
            <path d="M185 197L240 205Q390 212 530 202L585 200M165 238L240 235Q380 230 480 236L608 238"/>
            <path d="M248 205C240 250 215 310 214 400V2160M528 203Q535 235 560 260C700 400 805 560 805 770V2160M100 390L925 892"/>
          </g>
          <use href="#wall" fill="none" stroke="#0c0c0c" stroke-width="28"/>
          <use href="#wall" fill="none" stroke="#5a5350" stroke-width="20" stroke-dasharray="32 5"/>
          <use href="#wall" fill="none" stroke="#0c0c0c" stroke-width="11"/>
        </g>
        <path d="M165 75H602" stroke="#111" stroke-width="6"/><circle cx="383" cy="75" r="13" fill="#111"/>
        <path d="M174 108L160 119 174 130M597 88L609 98 597 108M597 130L610 140 597 150" fill="none" stroke="#111" stroke-width="6"/>
      </g>

      <!-- watermark -->
      <g font-family="'Liberation Serif', serif" font-size="71" fill="#f4f5f0" fill-opacity=".8" clip-path="url(#mark)">
        <text transform="scale(.67 1)" x="1241 1293 1345 1401" y="560">www.</text>
        <text transform="scale(.9 1)" x="1084" y="560">3</text>
        <text x="1012" y="560">d</text>
        <text transform="scale(.64 1)" x="1637" y="560">m</text>
        <text x="1083" y="560">o</text>
      </g>

      <!-- view cube -->
      <g font-family="'Open Sans', sans-serif">
        <ellipse cx="1856" cy="231" rx="30" ry="3.500" fill="#999" filter="url(#b4)"/>
        <path d="M1830.500 177.500h52v52h-52z" fill="url(#cube)" stroke="#9a9a9a"/>
        <text x="1842" y="209" font-size="14.500" font-weight="700" fill="#8b9299" textLength="29" lengthAdjust="spacingAndGlyphs">BACK</text>
        <text x="1874" y="174" font-size="15" fill="#8f8fe6" stroke="#8f8fe6" stroke-width=".5">Z</text>
        <text x="1818" y="230" font-size="14" fill="#f28a8a" stroke="#f28a8a" stroke-width=".5" textLength="8" lengthAdjust="spacingAndGlyphs">X</text>
        <path d="M1827 226h4" stroke="#f28a8a"/>
        <text x="1881" y="237" font-size="13" fill="#7ee07e" stroke="#7ee07e" stroke-width=".5">Y</text>
      </g>
    </svg>

    <!-- Browser panel -->
    <aside class="absolute left-[4px] top-[7px] w-[300px] font-['Liberation_Sans',sans-serif] text-[11px]">
      <div class="h-[25px] bg-[#f1f1f1] border border-[#bdbdbd] flex items-center">
        <svg class="ml-[4px] w-[11px] h-[7px]" viewBox="0 0 11 7"><path d="M5 .5v6L0 3.500zM11 .5v6L6 3.500z" fill="#222"/></svg>
        <span class="ml-[9px] pt-px text-[#666] font-['Roboto',sans-serif] text-[11px]">BROWSER</span>
        <svg class="ml-auto mr-px w-[19px] h-[12px]" viewBox="0 0 19 12"><circle cx="4.500" cy="6" r="4.500" fill="#222"/><path d="M2 6h5" stroke="#fff" stroke-width="1.500"/><path d="M16.500 1v10M18.500 1v10" stroke="#888"/></svg>
      </div>
      <div class="mt-[3px] h-[24px] flex items-center">
        <svg class="ml-[16px] w-[13px] h-[12px]" viewBox="0 0 13 12"><path d="M1 11h11V1z" fill="#999" stroke="#222"/></svg>
        <div class="ml-[7px] w-[184px] h-[18px] bg-[#f1f1f1] flex items-center">
          <svg class="ml-[3px] w-[16px] h-[12px]"><use href="#i-eye"/></svg>
          <div class="ml-[6px] w-[134px] h-[16px] bg-[#8c8c8c] flex items-center text-white font-bold whitespace-nowrap">
            <svg class="ml-[3px] w-[16px] h-[16px]" viewBox="0 0 16 16"><path d="M.5 4Q1 1 4 .5h11.500V11q-1 4-4 4.500H.5z" fill="#f0f0f0" stroke="#555"/><path d="M12 4.500v11q3-1 3.500-4.500V.5z" fill="#c9c9d6"/></svg>
            <span class="ml-[14px]">Engine oil can v1</span>
          </div>
          <svg class="ml-[4px] size-[13px]" viewBox="0 0 13 13"><circle cx="6.500" cy="6.500" r="5.800" fill="#fff" stroke="#222" stroke-width="1.200"/><circle cx="6.500" cy="6.500" r="2" fill="#222"/></svg>
        </div>
      </div>
      <div id="tree"></div>
    </aside>

    <!-- Comments panel -->
    <div class="absolute left-[4px] top-[812px] w-[300px] h-[25px] bg-[#f1f1f1] border border-[#cfcfcf] flex items-center">
      <span class="ml-[24px] pt-px text-[11px] tracking-[-0.350px] text-[#666]">COMMENTS</span>
      <svg class="ml-auto mr-px w-[19px] h-[12px]" viewBox="0 0 19 12"><circle cx="4.500" cy="6" r="4.500" fill="#222"/><path d="M2 6h5M4.500 3.500v5" stroke="#fff" stroke-width="1.400"/><path d="M16.500 1v10M18.500 1v10" stroke="#888"/></svg>
    </div>

    <!-- Navigation bar -->
    <div class="absolute left-[842px] top-[813px] w-[235px] h-[24px] bg-[#f0f0f0]">
      <svg class="w-[235px] h-[24px]" viewBox="0 0 235 24" fill="none" stroke="#333" stroke-width="1.200">
        <g fill="#333" stroke="none"><path d="M23 10h6l-3 4.500zM134 10h6l-3 4.500zM164 10h6l-3 4.500zM195 10h6l-3 4.500zM226 10h6l-3 4.500z"/></g>
        <path d="M9.500 4q-4 3-4 8t4 8M9.500 4q4 3 4 8M5 8q-4 1-4 3.500 0 4 8.500 4 8 0 8-4 0-3-4-3.500"/><path d="M9.500 8v7M7 11.500h5" stroke="#2f6fb0"/><path d="M8 15.500l4 2.500M14 15l-3 4" />
        <path d="M36 11h13v9H36zM36 8h12l1 3M38 8l5-4v4"/><path d="M39 13.500h7v4h-7z" fill="#a9bde0"/>
        <path d="M64 13l-2-3q2-1 4 2l-1-6q1-1.500 2 0l1 4V5q1.500-1.500 2 0v5l1.500-4q1.500-1 1.500.5L72 11l2.500-3q1.500 0 1 1.500-1 7-4 10.500h-5q-1-4-3-6z"/>
        <circle cx="92" cy="11" r="4.500"/><path d="M95 14l5 5" stroke-width="2.400"/><path d="M98 6h5M100.500 3.500v5M98 11h5"/>
        <path d="M114 4h14v15h-14z" stroke-dasharray="2 2" stroke="#777"/><circle cx="119.500" cy="11" r="5.500" fill="#e8eefa"/><path d="M123 15l5 5" stroke-width="2.400"/>
        <path d="M146 5h15v12h-15zM150 20h7"/><path d="M148.500 7.500h10v7h-10z" fill="#7ea3dc" stroke="#5a7fb8"/>
        <path d="M178 4.500h15v15h-15z" fill="#cdd3e4"/><path d="M181 4.500v15M184 4.500v15M187 4.500v15M190 4.500v15M178 7.500h15M178 10.500h15M178 13.500h15M178 16.500h15" stroke-width=".8"/>
        <path d="M209 5h6v5.500h-6zM217 5h6v5.500h-6zM209 12.500h6V18h-6zM217 12.500h6V18h-6z" fill="#a9c2ea"/>
      </svg>
    </div>
  </main>

  <!-- Timeline -->
  <div class="h-[53px] shrink-0 flex bg-[#f1f1f1]">
    <svg class="w-[136px] h-[53px]" viewBox="0 1 136 53" fill="#444"><path d="M11 18h2.500v14H11zM23 18v14l-9-7zM45 19v12l-10-6zM46.500 21H48v8h-1.500zM61 17v16l11-8zM85 21h1.500v8H85zM88 19v12l10-6zM111 18v14l9-7zM121 18h2.500v14H121z"/></svg>
    <div class="relative">
      <div id="timeline" class="flex pt-[15px] pl-[6px]"></div>
      <svg class="absolute left-[911px] top-[9px] w-[13px] h-[32px]" viewBox="0 0 13 32"><path d="M0 0h13v4L8 9v23H5.500V9L0 4z" fill="#666"/></svg>
    </div>
    <svg class="ml-auto mr-[9px] mt-[16px] size-[16px]"><use href="#i-gear"/></svg>
  </div>

  <!-- Taskbar -->
  <footer class="h-[44px] shrink-0 bg-[#202020] text-white font-['Open_Sans',sans-serif] text-[12px] leading-[16px] flex">
    <div class="w-[665px] flex">
      <svg class="ml-[19px] mt-[12px] w-[25px] h-[24px]" viewBox="0 0 25 24"><path d="M16 1q8 4 7 12-2 9-11 9-8 0-10-7 8 3 12-3 3-5 2-11z" fill="#f6b332"/><path d="M2 15q6 3 10 0l2 7q-8 1-12-7z" fill="#ee8c2a"/><path d="M3 9q-4-3 0-6 4-4 7 0 5 1 3 5-2 2-10 1z" fill="#b7d0f0"/><path d="M15 22q-4-2 0-5 4-3 7 1 4 0 3 3-2 2-10 1z" fill="#c4d8f4"/></svg>
      <div class="ml-[7px] mt-[9px] whitespace-nowrap"><div class="tracking-[-0.400px]">24°C</div><div class="text-[#d0d0d0] tracking-[-0.200px]">Partly cloudy</div></div>
    </div>
    <div class="flex items-center *:shrink-0 pt-[4px]">
      <svg class="w-[44px] h-[40px]" viewBox="0 0 44 40"><linearGradient id="win" x2="1" y2="1"><stop offset="0" stop-color="#7fdbff"/><stop offset="1" stop-color="#1495e6"/></linearGradient><path d="M10.500 9h11v11h-11zM22.800 9h11v11h-11zM10.500 21.200h11v11h-11zM22.800 21.200h11v11h-11z" fill="url(#win)"/></svg>
      <div class="ml-[4px] w-[99px] h-[32px] rounded-full bg-[#2e2e2e] flex items-center pl-[22px]">
        <svg class="w-[15px] h-[15px]" viewBox="0 0 15 15" fill="none" stroke="#fff" stroke-width="1.700"><circle cx="9" cy="6" r="5"/><path d="M5.500 9.500L1 14.500"/></svg>
        <span class="ml-[4px] pt-px text-[12px] tracking-[-0.250px]">Search</span>
      </div>
      <svg class="ml-[4px] w-[440px] h-[40px]" viewBox="816 1036 440 40">
        <path d="M834 1045h16v16h-16z" fill="#f3f3f3"/><path d="M826 1051h16v16h-16z" fill="#8d8d8d" fill-opacity=".85"/>
        <path d="M871 1068l1-6a11.500 11.500 0 1 1 6 5z" fill="#6d68bd"/><rect x="875" y="1051" width="9" height="9" rx="1.500" fill="#fff"/><path d="M885 1054l4-3v9l-4-3z" fill="#fff"/>
        <path d="M914 1045h8l2 3h14v7h-24z" fill="#e2a31d"/><path d="M914 1050h24v17h-24z" fill="#fcd04e"/><path d="M918 1067v-5q0-3 3-3h10q3 0 3 3v5z" fill="#1b7fc4"/><rect x="923" y="1072" width="6" height="3" rx="1.500" fill="#999"/>
        <circle cx="970" cy="1056" r="12" fill="#1b78cf"/><path d="M958 1055q2-11 13-11 11 1 11 11 0 5-6 5-5 0-4-3-1-5-7-4-4 1-7 2z" fill="#3ccfa0"/><path d="M961 1048q4-5 11-4 10 1 10 10-4-7-12-7-5 0-9 1z" fill="#5adb7c"/><path d="M970 1053q-6 4-3 9 3 5 11 4-8 4-15-2-4-6 0-10 3-3 7-1z" fill="#0d4d97"/>
        <path d="M1009 1049v-4h10v4" fill="none" stroke="#3fb2e8" stroke-width="1.800"/><rect x="1002" y="1049" width="24" height="19" rx="3" fill="#f7f7f7"/><path d="M1009 1053h4.500v4.500h-4.500z" fill="#e8512a"/><path d="M1014.500 1053h4.500v4.500h-4.500z" fill="#7bb82c"/><path d="M1009 1058.500h4.500v4.500h-4.500z" fill="#1fa0e0"/><path d="M1014.500 1058.500h4.500v4.500h-4.500z" fill="#f7b51c"/>
        <circle cx="1023" cy="1047" r="8" fill="#4cb3ef"/><text x="1023" y="1051" font-size="11" fill="#10324a" text-anchor="middle">1</text>
        <path d="M1058 1045l10 5-2 12-8 6-8-6-2-12z" fill="#4a4d51"/><path d="M1058 1051l6 9-3 3-8-2z" fill="#24272b" stroke="#b4b7bb" stroke-width="1.300"/><path d="M1058 1045l-5 13-3 3-2-11z" fill="#85888d"/>
        <path d="M1090 1044h24v24h-24z" fill="#2b4fd8"/><path d="M1090 1056v12h24v-3z" fill="#5a35e0"/><path d="M1093 1062l7-12M1098 1062l8-12v9M1103 1059h4M1110 1050v12" stroke="#fff" stroke-width="1.700" fill="none"/>
        <circle cx="1146" cy="1056" r="12" fill="#f5c62c"/><path d="M1135.500 1050a12 12 0 0 1 21 0H1146a6 6 0 0 0-5.500 9z" fill="#df4437"/><path d="M1135.500 1050a12 12 0 0 0 9.500 18l6-9a6 6 0 0 1-10 0z" fill="#2a9e54"/><circle cx="1146" cy="1056" r="5.700" fill="#fff"/><circle cx="1146" cy="1056" r="4.500" fill="#3f82ee"/>
        <rect x="1189" y="1044" width="11" height="10" fill="#e8e8e8"/><rect x="1190.500" y="1045.500" width="8" height="6" fill="#27b6d8"/><path d="M1179 1053l8-3v3l-4 1.500V1067h-2v-12l-2 1zM1184 1055h3v12h-3z" fill="#ddd"/><circle cx="1192" cy="1061" r="5.500" fill="#cfd6cc"/><circle cx="1192" cy="1061" r="1.700" fill="#2e5c32"/><path d="M1188 1057l3 3M1193 1062l3 3M1196 1057l-3 3" stroke="#4b8a50" stroke-width="1.300"/><rect x="1179" y="1073" width="2" height="2" fill="#ccc"/>
        <rect x="1214" y="1037" width="39" height="39" rx="3" fill="#333"/><path d="M1223 1046l3-2h18v20l-3 4h-18z" fill="#f2601a"/><path d="M1223 1060h21v4l-3 4h-18z" fill="#8a3209"/><path d="M1231 1058v-9h6M1231 1053.500h5" stroke="#fff" stroke-width="2.200" fill="none"/><text x="1228" y="1067" font-size="5.500" font-weight="700" fill="#f0a37c">360</text><rect x="1226" y="1072" width="16" height="3" rx="1.500" fill="#54b6ec"/>
      </svg>
    </div>
    <svg class="ml-[407px] w-[26px] h-[44px]" viewBox="0 0 26 44"><path d="M4 28l6-6 6 6" fill="none" stroke="#ddd" stroke-width="1.500"/></svg>
    <div class="mt-[9px] w-[36px] text-center text-[12px] tracking-[-0.200px]"><div>ENG</div><div>IN</div></div>
    <svg class="ml-[8px] w-[80px] h-[44px]" viewBox="1733 1032 80 44" fill="none" stroke="#fff" stroke-width="1.400"><path d="M1737 1053q8-7 16 0M1739.500 1056q5.500-5 11 0M1742 1059q3-3 6 0"/><circle cx="1745" cy="1061" r="1.200" fill="#fff" stroke="none"/><path d="M1761.500 1053.500h2.500l4-3.500v12l-4-3.500h-2.500zM1770 1053q2 3 0 6M1772.500 1051q4 5 0 10" stroke-width="1.200"/><path d="M1790 1051.500h8v9h-10v-3M1800 1054v4"/><path d="M1792 1054h4v4h-5z" fill="#fff"/><path d="M1786 1050v3h4v-3M1786.500 1048v2M1789.500 1048v2M1788 1053v7" stroke-width="1.200"/></svg>
    <div class="mt-[8px] ml-auto text-right whitespace-nowrap tracking-[-0.300px]"><div>03:18</div><div>01-05-2023</div></div>
    <div class="ml-[8px] mr-[16px] mt-[16px] size-[16px] rounded-full bg-[#4cb8f5] text-[#0b2b40] text-[11px] text-center">5</div>
  </footer>

  <script>
    // grid lines, one major every five
    const grid = document.getElementById('grid');
    const step = 28.18;
    let minor = '', major = '';
    for (let i = -28; i < 30; i++) {
      const x = Math.floor(960 + i * step) + 0.5;
      if (i % 5 === 0) major += `M${x} 137V978`; else minor += `M${x} 137V978`;
    }
    for (let j = -2; j <= 27; j++) {
      if (j === 0) continue;
      const y = Math.floor(911.4 - j * step) + 0.5;
      if (j % 5 === 0) major += `M143 ${y}H1805`; else minor += `M143 ${y}H1805`;
    }
    grid.innerHTML = `<path d="${minor}" stroke="#efefef"/><path d="${major}" stroke="#cacaca"/>`;

    // browser tree
    const rows = [
      ['Document Settings', 'gear'], ['Named Views', 'folder'], ['Origin', 'eyeoff'],
      ['Analysis', 'eye'], ['Bodies', 'eye'], ['Sketches', 'eye'], ['Construction', 'eye']
    ];
    document.getElementById('tree').innerHTML = rows.map(([name, icon]) => {
      const extra = icon.startsWith('eye') ? '<svg class="ml-[9px] w-[16px] h-[13px]"><use href="#i-folder"/></svg>' : '';
      return `
        <div class="h-[24px] flex items-center pl-[36px]">
          <svg class="w-[10px] h-[14px]"><use href="#i-tri"/></svg>
          <div class="ml-[8px] h-[20px] flex items-center bg-[#f3f3f3] pl-[3px] pr-[10px] whitespace-nowrap">
            <svg class="w-[16px] ${icon === 'gear' ? 'h-[16px]' : icon === 'folder' ? 'h-[13px]' : 'h-[12px]'}"><use href="#i-${icon}"/></svg>${extra}
            <span class="${icon === 'gear' ? 'ml-[14px] tracking-[-0.150px]' : 'ml-[14px]'}">${name}</span>
          </div>
        </div>`;
    }).join('');

    // timeline features
    const features = ['sketch', 'extrude', 'sketch', 'cut', 'plane', 'sketch', 'extrude', 'loft', 'hole', 'box',
      'sketch', 'cut', 'cut', 'loft', 'loft', 'hole', 'bend', 'bend', 'thread', 'sketch', 'sketch', 'pipe',
      'fillet', 'joint', 'move', 'combine', 'fillet', 'shell', 'plane', 'sketch', 'coil', 'tan', 'sketch',
      'extrudeb', 'tan', 'sketch', 'extrudeb', 'combine'];
    document.getElementById('timeline').innerHTML = features.map((f, i) => `
      <div class="w-[24px] flex flex-col items-center">
        <svg class="size-[16px]"><use href="#t-${f}"/></svg>
        <svg class="mt-[1px] w-[24px] h-[8px]" viewBox="0 0 24 8"><path d="M12.500 1v6M${i ? 0 : 12} 7H${i === features.length - 1 ? 13 : 24}" stroke="#bdbdbd" stroke-width="1.500"/></svg>
      </div>`).join('');
  </script>
</body>
</html>
